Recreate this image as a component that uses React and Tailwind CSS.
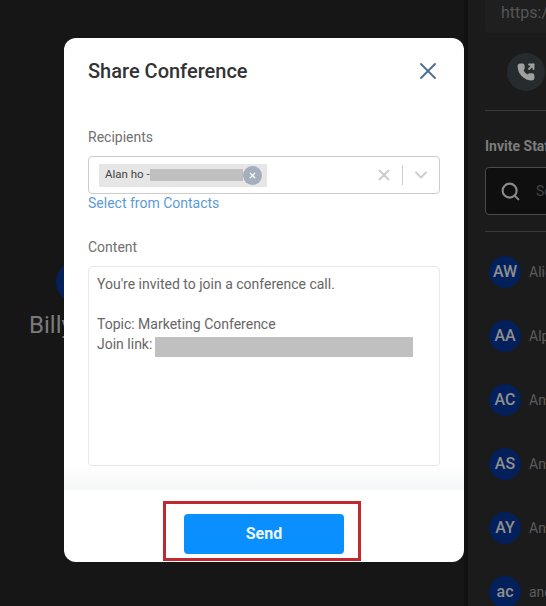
import { Search, PhoneOutgoing, X, ChevronDown } from "lucide-react";

const staff = [
    { initials: "AW", name: "Alice" },
    { initials: "AA", name: "Alpha" },
    { initials: "AC", name: "Andy" },
    { initials: "AS", name: "Anna" },
    { initials: "AY", name: "Annie" },
    { initials: "ac", name: "andrew" },
];

function SidePanel() {
    return (
        <div className="w-[78px] shrink-0 overflow-hidden bg-[#1b1b1b] pl-[17px]">
            <div className="w-[200px]">
                <div className="h-[33px] w-[200px] rounded-b bg-[#1f1f1f] pl-4 text-base leading-[26px] text-[#555555]">https://conf</div>
                <div className="flex h-[77px] items-center pl-[22px]">
                    <div className="flex h-[38px] w-[38px] items-center justify-center rounded-full bg-[#262c2e]">
                        <PhoneOutgoing size={18} strokeWidth={2.4} className="fill-[#a0a0a0] text-[#a0a0a0]" />
                    </div>
                </div>
                <div className="h-px bg-[#3a3a3a]" />
                <div className="mt-[27px] text-sm font-bold leading-4 text-[#7d7d7d]">Invite Staff</div>
                <div className="mt-[13px] flex h-[48px] items-center gap-[15px] rounded border border-[#4a4a4a] bg-[#0f0f0f] pl-[14px]">
                    <Search size={21} strokeWidth={2.4} className="text-[#8a8a8a]" />
                    <span className="text-sm text-[#444444]">Search</span>
                </div>
                <div className="mt-4 h-px bg-[#3a3a3a]" />
                <div className="pt-2">
                    {staff.map((s) => (
                        <div key={s.initials} className="flex h-16 items-center gap-2 pl-1">
                            <div className="flex h-8 w-8 shrink-0 items-center justify-center rounded-full bg-[#03205a] text-base font-medium text-[#8f8f8f]">
                                {s.initials}
                            </div>
                            <span className="text-sm text-[#5c5c5c]">{s.name}</span>
                        </div>
                    ))}
                </div>
            </div>
        </div>
    );
}

function ShareModal() {
    return (
        <div className="absolute left-16 top-[38px] flex h-[524px] w-[400px] flex-col rounded-xl bg-white">
            <div className="flex h-[66px] shrink-0 items-center justify-between pl-6 pr-[22px]">
                <h2 className="text-xl font-medium leading-7 text-[#333333]">Share Conference</h2>
                <X size={28} strokeWidth={1.6} className="text-[#4f6f8f]" />
            </div>

            <div className="flex-1 px-6 pt-[23px]">
                <label className="block text-sm leading-5 text-[#707070]">Recipients</label>
                <div className="mt-[9px] flex h-[38px] items-center justify-between rounded border border-[#cccccc] pl-[10px] pr-[8px]">
                    <div className="flex h-[23px] w-[168px] items-center bg-[#e6e6e6] pl-[6px]">
                        <span className="w-[45px] shrink-0 whitespace-nowrap text-[11.5px] text-[#444444]">Alan ho -</span>
                        <div className="h-3 w-[93px] bg-[#c0c0c0]" />
                        <div className="flex h-[19px] w-[19px] items-center justify-center rounded-full bg-[#a4aebd]">
                            <X size={9} strokeWidth={3.5} className="text-white" />
                        </div>
                    </div>
                    <div className="flex items-center">
                        <X size={18} strokeWidth={2.6} className="text-[#cccccc]" />
                        <div className="ml-[9px] h-5 w-px bg-[#cccccc]" />
                        <ChevronDown size={20} strokeWidth={2.2} className="ml-2 text-[#cccccc]" />
                    </div>
                </div>
                <a className="block text-sm leading-[18px] text-[#5b9bd5]">Select from Contacts</a>

                <label className="mt-[25px] block text-sm leading-5 text-[#707070]">Content</label>
                <div className="mt-[9px] h-[200px] rounded border border-[#e8e8e8] px-2 pt-[7px] text-sm leading-5 text-[#666666]">
                    <p>You're invited to join a conference call.</p>
                    <p className="mt-5">Topic: Marketing Conference</p>
                    <div className="flex">
                        <span>Join link:</span>
                        <div className="ml-[3px] mt-[3px] h-5 w-[258px] bg-[#c0c0c0]" />
                    </div>
                </div>
            </div>

            <div className="h-6 shrink-0 bg-gradient-to-b from-white to-[#f5f6f7]" />
            <div className="relative flex h-[72px] shrink-0 items-start justify-center pt-6">
                <button className="h-10 w-40 rounded bg-[#0a8fff] text-base font-bold text-[#eef7ff]">Send</button>
                {/* annotation drawn on the screenshot */}
                <div className="absolute left-[99px] top-[11px] h-[60px] w-[198px] border-[3px] border-[#c4282f]" />
            </div>
        </div>
    );
}

export default function App() {
    return (
        <div className="relative flex h-[606px] w-[546px] overflow-hidden bg-[#161616] font-['Roboto',sans-serif]">
            <div className="relative flex-1">
                <div className="absolute left-[56px] top-[262px] h-[40px] w-[40px] rounded-full bg-[#03205a]" />
                <div className="absolute left-[29px] top-[309px] text-2xl font-normal text-[#7a7a7a]">Billy</div>
                <div className="absolute right-0 top-0 h-full w-[4px] bg-[#111111]" />
            </div>
            <SidePanel />
            <ShareModal />
        </div>
    );
}
